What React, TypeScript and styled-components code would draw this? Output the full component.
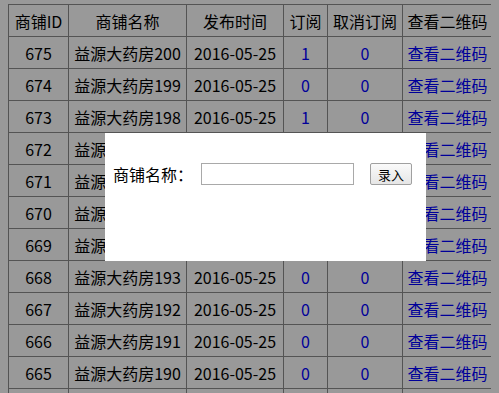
import React from "react";
import styled, { createGlobalStyle } from "styled-components";

const GlobalStyle = createGlobalStyle`
  html, body {
    overflow: hidden;
    height: 100%;
  }
  body {
    margin: 4px 8px 0 8px;
    background: #ffffff;
    font-family: "Noto Sans CJK SC", "Noto Sans", sans-serif;
    color: #000;
  }
`;

const Table = styled.table`
  border-collapse: collapse;
  table-layout: fixed;
  width: 485px;
  font-size: 16px;
  border: 1px solid #8c8c8c;
`;

const Cell = styled.td<{ $blue?: boolean }>`
  border: 1px solid #8c8c8c;
  height: 31px;
  padding: 0 2px;
  text-align: center;
  vertical-align: middle;
  white-space: nowrap;
  color: ${(p) => (p.$blue ? "#0000ff" : "#000")};
`;

const HeadCell = styled.th`
  border: 1px solid #8c8c8c;
  height: 31px;
  padding: 0 2px;
  text-align: center;
  vertical-align: middle;
  font-weight: normal;
  white-space: nowrap;
`;

const Link = styled.a`
  color: #0000ff;
  text-decoration: none;
`;

const Overlay = styled.div`
  position: fixed;
  inset: 0;
  background: rgba(0, 0, 0, 0.4);
`;

const Dialog = styled.div`
  position: fixed;
  left: 105px;
  top: 133px;
  width: 321px;
  height: 128px;
  background: #fff;
  box-sizing: border-box;
  padding: 30px 0 0 8px;
`;

const FormRow = styled.div`
  display: flex;
  align-items: center;
  height: 22px;
`;

const Label = styled.label`
  font-size: 16px;
  width: 88px;
  color: #000;
`;

const Input = styled.input`
  box-sizing: border-box;
  width: 153px;
  height: 22px;
  border: 1px solid #a9a9a9;
  padding: 0 2px;
  margin: 0;
  outline: none;
`;

const Button = styled.button`
  box-sizing: border-box;
  margin-left: 16px;
  width: 42px;
  height: 22px;
  padding: 0;
  border: 1px solid #a0a0a0;
  border-radius: 2px;
  background: linear-gradient(#fafafa, #e6e6e6);
  font-family: "Noto Sans CJK SC", sans-serif;
  font-size: 13px;
  color: #000;
`;

const rows = Array.from({ length: 12 }, (_, i) => ({
  id: 675 - i,
  name: `益源大药房${200 - i}`,
  date: "2016-05-25",
  sub: i === 0 || i === 2 ? 1 : 0,
  unsub: 0,
}));

export default function App() {
  return (
    <>
      <GlobalStyle />
      <Table>
        <colgroup>
          <col style={{ width: 60 }} />
          <col style={{ width: 118 }} />
          <col style={{ width: 97 }} />
          <col style={{ width: 44 }} />
          <col style={{ width: 75 }} />
          <col style={{ width: 90 }} />
        </colgroup>
        <thead>
          <tr>
            <HeadCell>商铺ID</HeadCell>
            <HeadCell>商铺名称</HeadCell>
            <HeadCell>发布时间</HeadCell>
            <HeadCell>订阅</HeadCell>
            <HeadCell>取消订阅</HeadCell>
            <HeadCell>查看二维码</HeadCell>
          </tr>
        </thead>
        <tbody>
          {rows.map((r) => (
            <tr key={r.id}>
              <Cell>{r.id}</Cell>
              <Cell>{r.name}</Cell>
              <Cell>{r.date}</Cell>
              <Cell $blue>{r.sub}</Cell>
              <Cell $blue>{r.unsub}</Cell>
              <Cell>
                <Link href="#">查看二维码</Link>
              </Cell>
            </tr>
          ))}
        </tbody>
      </Table>
      <Overlay />
      <Dialog>
        <FormRow>
          <Label>商铺名称：</Label>
          <Input type="text" />
          <Button>录入</Button>
        </FormRow>
      </Dialog>
    </>
  );
}
